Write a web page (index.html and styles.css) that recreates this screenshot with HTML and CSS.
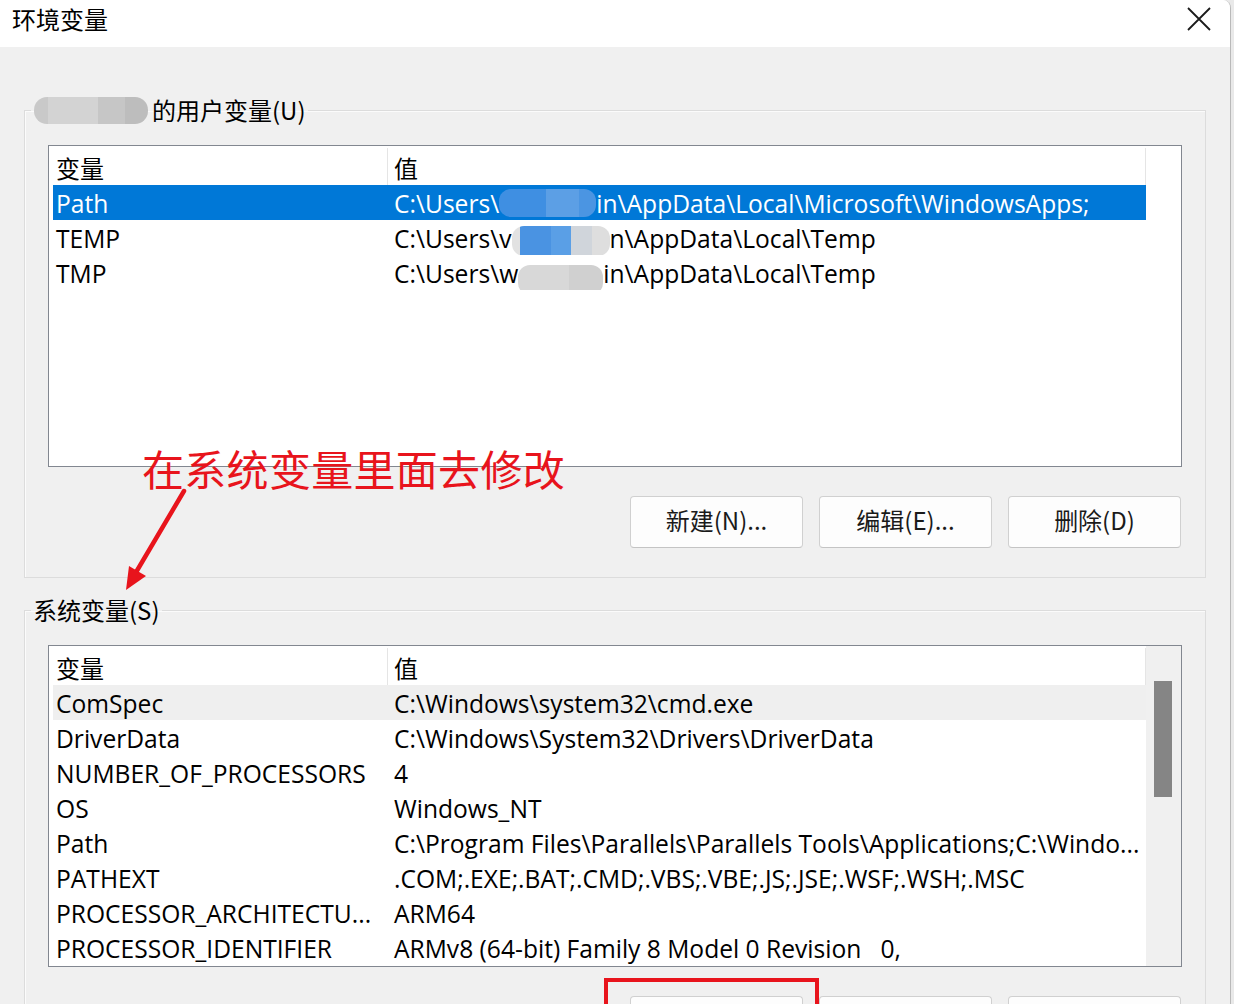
FILE: index.html
```html
<!DOCTYPE html>
<html lang="zh-CN">
<head>
<meta charset="utf-8">
<title>环境变量</title>
<link rel="stylesheet" href="styles.css">
</head>
<body>
<div class="window">
  <div class="titlebar">
    <span class="title">环境变量</span>
    <svg class="close" width="24" height="24" viewBox="0 0 24 24"><path d="M1 1 L23 23 M23 1 L1 23" stroke="#1b1b1b" stroke-width="1.8" fill="none"/></svg>
  </div>
  <div class="content">
    <fieldset class="group">
      <legend><span class="name-blur"></span>的用户变量(U)</legend>
      <div class="list">
        <div class="list-main">
          <div class="row head"><div class="c1">变量</div><div class="c2">值</div></div>
          <div class="row sel"><div class="c1">Path</div><div class="c2">C:\Users\<span class="smudge s-blue"></span>in\AppData\Local\Microsoft\WindowsApps;</div></div>
          <div class="row"><div class="c1">TEMP</div><div class="c2">C:\Users\v<span class="smudge s-mix"></span>n\AppData\Local\Temp</div></div>
          <div class="row"><div class="c1">TMP</div><div class="c2">C:\Users\w<span class="smudge s-gray"></span>in\AppData\Local\Temp</div></div>
        </div>
        <div class="vscroll blank"></div>
      </div>
      <div class="buttons">
        <button class="btn">新建(N)...</button>
        <button class="btn">编辑(E)...</button>
        <button class="btn">删除(D)</button>
      </div>
    </fieldset>
    <fieldset class="group second">
      <legend>系统变量(S)</legend>
      <div class="list">
        <div class="list-main">
          <div class="row head"><div class="c1">变量</div><div class="c2">值</div></div>
          <div class="row hover"><div class="c1">ComSpec</div><div class="c2">C:\Windows\system32\cmd.exe</div></div>
          <div class="row"><div class="c1">DriverData</div><div class="c2">C:\Windows\System32\Drivers\DriverData</div></div>
          <div class="row"><div class="c1">NUMBER_OF_PROCESSORS</div><div class="c2">4</div></div>
          <div class="row"><div class="c1">OS</div><div class="c2">Windows_NT</div></div>
          <div class="row"><div class="c1">Path</div><div class="c2">C:\Program Files\Parallels\Parallels Tools\Applications;C:\Windo...</div></div>
          <div class="row"><div class="c1">PATHEXT</div><div class="c2">.COM;.EXE;.BAT;.CMD;.VBS;.VBE;.JS;.JSE;.WSF;.WSH;.MSC</div></div>
          <div class="row"><div class="c1">PROCESSOR_ARCHITECTU...</div><div class="c2">ARM64</div></div>
          <div class="row"><div class="c1">PROCESSOR_IDENTIFIER</div><div class="c2">ARMv8 (64-bit) Family 8 Model 0 Revision&nbsp;&nbsp;&nbsp;0,</div></div>
        </div>
        <div class="vscroll"><div class="thumb"></div></div>
      </div>
      <div class="buttons">
        <button class="btn"></button>
        <button class="btn"></button>
        <button class="btn"></button>
      </div>
    </fieldset>
  </div>

  <div class="note">在系统变量里面去修改</div>
  <svg class="arrow" width="90" height="110" viewBox="0 0 90 110">
    <path d="M63 3 L14 86" stroke="#e8141c" stroke-width="4.5" stroke-linecap="round" fill="none"/>
    <path d="M5 102 L8 78 L25 88 Z" fill="#e8141c"/>
  </svg>
  <div class="redbox"></div>
</div>
</body>
</html>
```

FILE: styles.css
```css
* { box-sizing: border-box; }

html, body {
  margin: 0;
  padding: 0;
}

body {
  width: 1234px;
  height: 1004px;
  overflow: hidden;
  background: #e9e9e9;
  font-family: "Open Sans", "Noto Sans CJK SC", sans-serif;
  font-size: 24.6px;
  color: #000;
}

.window {
  position: relative;
  width: 1231px;
  height: 1004px;
  background: #f0f0f0;
  border-right: 1px solid #b9b9b9;
  border-top-right-radius: 8px;
  overflow: hidden;
}

.titlebar {
  height: 47px;
  background: #fff;
  display: flex;
  align-items: center;
  padding: 0 19px 9px 12px;
}

.title {
  font-family: "Noto Sans CJK SC", sans-serif;
  font-size: 24px;
  line-height: 30px;
}

.close {
  margin-left: auto;
  display: block;
}

.content {
  padding: 48px 0 0 24px;
}

.group {
  width: 1182px;
  margin: 0;
  padding: 20px 23px 29px 23px;
  border: 1px solid #dcdcdc;
  box-shadow: inset 1px 1px 0 #fbfbfb;
  min-width: 0;
}

.group.second {
  margin-top: 17px;
}

legend {
  font-family: "Noto Sans CJK SC", sans-serif;
  font-size: 24px;
  line-height: 30px;
  padding: 0 2px;
  margin-left: -17px;
  display: flex;
  align-items: center;
}

.name-blur {
  display: inline-block;
  width: 114px;
  height: 27px;
  margin-left: 1px;
  margin-right: 4px;
  border-radius: 13px;
  background: linear-gradient(90deg, #c9c9c9 0 12%, #d3d3d3 12% 56%, #c6c6c6 56% 80%, #bdbdbd 80%);
}

.list {
  display: flex;
  height: 322px;
  background: #fff;
  border: 1px solid #828790;
}

.list-main {
  flex: 1;
  padding-left: 4px;
  min-width: 0;
}

.vscroll {
  width: 35px;
  background: #f0f0f0;
  padding: 35px 0 0 8px;
}

.vscroll.blank {
  background: #fff;
  padding: 0;
}

.thumb {
  width: 18px;
  height: 116px;
  background: #858585;
}

.row {
  display: flex;
  height: 35px;
  line-height: 35px;
  padding-top: 1px;
  white-space: nowrap;
}

.row.head {
  height: 39px;
  line-height: 39px;
  padding-top: 2px;
  font-family: "Noto Sans CJK SC", sans-serif;
  font-size: 24px;
}

.c1 {
  width: 335px;
  flex: none;
  padding-left: 3px;
  border-right: 1px solid transparent;
  overflow: hidden;
}

.c2 {
  flex: 1;
  padding-left: 6px;
  overflow: hidden;
  border-right: 1px solid transparent;
}

.row.head .c1,
.row.head .c2 {
  border-right-color: #e5e5e5;
}

.row.sel {
  background: #0078d7;
  color: #fff;
}

.row.hover {
  background: #efefef;
}

.smudge {
  display: inline-block;
  vertical-align: middle;
  height: 28px;
  border-radius: 12px;
}

.s-blue {
  width: 97px;
  margin-top: -6px;
  background: linear-gradient(90deg, #3f8fe2 0 48%, #5c9fe5 48% 82%, #4b95e2 82%);
}

.s-mix {
  width: 98px;
  height: 30px;
  background: linear-gradient(90deg, #e2e2e2 0 8%, #4a93e2 8% 40%, #5a9fe6 40% 60%, #d0d5db 60% 82%, #dedede 82%);
}

.s-gray {
  width: 85px;
  height: 30px;
  margin-bottom: -8px;
  background: linear-gradient(90deg, #d8d8d8 0 60%, #d0d0d0 60%);
}

.buttons {
  display: flex;
  justify-content: flex-end;
  gap: 16px;
  margin-top: 29px;
  padding-right: 1px;
}

.btn {
  width: 173px;
  height: 52px;
  background: #fdfdfd;
  border: 1px solid #d0d0d0;
  border-bottom-color: #c4c4c4;
  border-radius: 4px;
  font-family: "Noto Sans CJK SC", sans-serif;
  font-size: 24px;
  color: #1a1a1a;
  padding: 0 0 5px;
}

.note {
  position: absolute;
  left: 142px;
  top: 440px;
  font-family: "Noto Sans CJK SC", sans-serif;
  font-size: 42px;
  line-height: 56px;
  color: #e8141c;
  letter-spacing: 0.3px;
}

.arrow {
  position: absolute;
  left: 121px;
  top: 488px;
}

.redbox {
  position: absolute;
  left: 604px;
  top: 978px;
  width: 215px;
  height: 60px;
  border: 4px solid #e8141c;
}
```
